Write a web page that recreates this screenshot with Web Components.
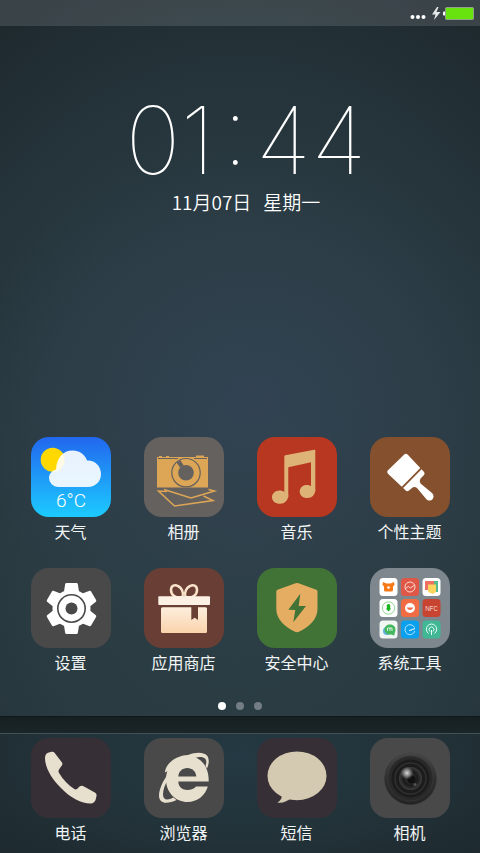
<!DOCTYPE html>
<html lang="zh-CN">
<head>
<meta charset="utf-8">
<meta name="viewport" content="width=device-width, initial-scale=1">
<title>桌面</title>
<style>
    body {
        margin: 0;
        font-family: "Noto Sans CJK SC", sans-serif;
        color: #f2f5f6;
        background: #222e34;
    }
</style>
</head>
<body>
<home-screen></home-screen>
<script>
class StatusBar extends HTMLElement {
    constructor() {
        super();
        this.attachShadow({ mode: "open" });
        this.shadowRoot.innerHTML = /*html*/ `
            <style>
                :host {
                    display: flex;
                    align-items: center;
                    justify-content: flex-end;
                    height: 26px;
                    padding-right: 6px;
                    background: rgba(255, 255, 255, .12);
                }
                svg { display: block; }
            </style>
            <svg width="64" height="26" viewBox="0 0 64 26" role="img" aria-label="正在充电">
                <g fill="#fff">
                    <circle cx="2.5" cy="17" r="2"/><circle cx="8" cy="17" r="2"/><circle cx="13.5" cy="17" r="2"/>
                    <path d="M27 7 22 14.5h3.500L24 20l6.500-8h-4L28.500 7z" fill="#e4e8e8"/>
                    <rect x="33" y="11.500" width="3" height="4" rx="1"/>
                </g>
                <rect x="35.500" y="7.500" width="28" height="12" rx="1" fill="#68e30e" stroke="#8fa08c"/>
            </svg>
        `;
    }
}

class DesktopClock extends HTMLElement {
    constructor() {
        super();
        this.attachShadow({ mode: "open" });
        this.shadowRoot.innerHTML = /*html*/ `
            <style>
                :host { display: block; color: #fff; }
                .time, .date { display: flex; justify-content: center; }
                .time {
                    gap: 8px;
                    font: 100 93px/96px Inter, sans-serif;
                    /* lifts the colon to the middle of the digits */
                    font-feature-settings: "case";
                }
                .date {
                    gap: 12px;
                    font-size: 19px;
                    font-weight: 350;
                    line-height: 28px;
                }
            </style>
            <div class="time"><span class="hours"></span><span>:</span><span class="minutes"></span></div>
            <div class="date"><span class="day"></span><span class="week"></span></div>
        `;
    }

    connectedCallback() {
        const [hours, minutes] = this.getAttribute("time").split(":");
        this.shadowRoot.querySelector(".hours").textContent = hours;
        this.shadowRoot.querySelector(".minutes").textContent = minutes;
        this.shadowRoot.querySelector(".day").textContent = this.getAttribute("day");
        this.shadowRoot.querySelector(".week").textContent = this.getAttribute("week");
    }
}

class AppIcon extends HTMLElement {
    constructor() {
        super();
        this.attachShadow({ mode: "open" });
        this.shadowRoot.innerHTML = /*html*/ `
            <style>
                :host { display: flex; justify-content: center; }
                button {
                    display: flex;
                    flex-direction: column;
                    align-items: center;
                    gap: 2px;
                    padding: 0;
                    border: 0;
                    background: none;
                    color: inherit;
                    font: 400 16px/24px "Noto Sans CJK SC", sans-serif;
                    cursor: pointer;
                }
                .tile {
                    width: 80px;
                    height: 80px;
                    border-radius: 18px;
                    background: var(--tile, #494949);
                    overflow: hidden;
                }
                ::slotted(svg) { display: block; width: 100%; height: 100%; }
            </style>
            <button type="button">
                <span class="tile"><slot></slot></span>
                <span class="label"></span>
            </button>
        `;
    }

    connectedCallback() {
        this.shadowRoot.querySelector(".label").textContent = this.getAttribute("label");
    }
}

class PageDots extends HTMLElement {
    constructor() {
        super();
        this.attachShadow({ mode: "open" });
        this.shadowRoot.innerHTML = /*html*/ `
            <style>
                :host { display: flex; justify-content: center; gap: 10px; }
                span {
                    width: 8px;
                    height: 8px;
                    border-radius: 50%;
                    background: #737d83;
                }
                .active { background: #fff; }
            </style>
        `;
    }

    connectedCallback() {
        const count = parseInt(this.getAttribute("count") || "1", 10);
        const active = parseInt(this.getAttribute("active") || "0", 10);
        for (let i = 0; i < count; i++) {
            const dot = document.createElement("span");
            dot.classList.toggle("active", i === active);
            this.shadowRoot.append(dot);
        }
    }
}

class AppGrid extends HTMLElement {
    constructor() {
        super();
        this.attachShadow({ mode: "open" });
        this.shadowRoot.innerHTML = /*html*/ `
            <style>
                :host {
                    display: grid;
                    grid-template-columns: repeat(4, 1fr);
                    row-gap: 25px;
                    padding: 0 14px;
                }
            </style>
            <slot></slot>
        `;
    }
}

class AppDock extends HTMLElement {
    constructor() {
        super();
        this.attachShadow({ mode: "open" });
        this.shadowRoot.innerHTML = /*html*/ `
            <style>
                :host { display: block; }
                .shelf {
                    height: 16px;
                    border-top: 1px solid #10171a;
                    border-bottom: 1px solid #425057;
                    background: linear-gradient(#161f22, #1b2629);
                }
                .apps {
                    padding: 4px 0 9px;
                    background: radial-gradient(ellipse 75% 130% at 50% 20%, #243943, #223238 55%, #1c272c);
                }
            </style>
            <div class="shelf"></div>
            <div class="apps"><slot></slot></div>
        `;
    }
}

class HomeScreen extends HTMLElement {
    constructor() {
        super();
        this.attachShadow({ mode: "open" });
        this.template = document.createElement("template");
        this.template.innerHTML = /*html*/ `
            <style>
                :host {
                    display: flex;
                    flex-direction: column;
                    min-height: 100vh;
                    background:
                        radial-gradient(ellipse 60% 30% at 53% 47%, rgba(52, 68, 88, .7), rgba(52, 68, 88, 0)),
                        radial-gradient(ellipse 90% 66% at 50% 60%, #2d3f46, #2a3b42 50%, #243339 80%, #1f2a2f 100%);
                }
                desktop-clock { margin: 66px 0 24px 12px; }
                app-grid.main { margin-top: auto; }
                page-dots { margin: 28px 0 6px; }
            </style>
            <status-bar></status-bar>
            <desktop-clock time="01:44" day="11月07日" week="星期一"></desktop-clock>

            <app-grid class="main">
                <app-icon label="天气" style="--tile: linear-gradient(#2267ee, #1ccbff)">
                    <svg viewBox="0 0 80 80">
                        <circle cx="21.7" cy="22.7" r="12" fill="#ffd800"/>
                        <path opacity=".9" fill="#fff" d="M27 50a9 9 0 0 1-9-9c0-4 3-7.500 7-8.500C25.500 21 32 13.500 41.500 13.500c7 0 12.500 4 14.500 10C64 23 70 29 70 37c0 7.500-5.500 13-13 13z"/>
                        <text x="40" y="70" font-family="Roboto, sans-serif" font-weight="300" font-size="19" text-anchor="middle" fill="#fff">6°C</text>
                    </svg>
                </app-icon>
                <app-icon label="相册" style="--tile: #65615e">
                    <svg viewBox="0 0 80 80" fill="none">
                        <path fill="#dca656" d="M13 20h2v-1h3v1h4v-1h3v1h27v-1.500h8V20h4v30.500H13z"/>
                        <path stroke="#65615e" d="M14 21.500h20M50 21.500h13"/>
                        <circle cx="42" cy="35.7" r="14.2" stroke="#65615e" stroke-width="1.200"/>
                        <circle cx="42" cy="35.7" r="7.8" fill="#65615e"/>
                        <path fill="#65615e" d="m32.500 25.500 4-2.300 3.200 5.300-3.700 2z"/>
                        <g stroke="#dca656" stroke-width="1.500">
                            <path d="M20 52.500 47 61l23.500-7-6-1.500"/>
                            <path d="M23 54.500 14.500 54l16 15 38.500-5.500-9.500-4.500"/>
                        </g>
                    </svg>
                </app-icon>
                <app-icon label="音乐" style="--tile: #b83720">
                    <svg viewBox="0 0 80 80" fill="#deb377">
                        <path d="M27.300 19.500q0-1 1-1.200l29-5.600q1-.2 1 .8V54.500H54V25.300l-22.700 4.900v30.300h-4z"/>
                        <path d="M31.300 58c0 5-3.300 8.800-8.300 8.800-4.500 0-8-2.800-8-6.600s3.500-6.700 7.500-6.700c2 0 3.500.500 4.800 1.500z"/>
                        <path d="M58.300 52.500c0 5-3.300 8.500-8 8.500-4.500 0-7.600-2.700-7.600-6.500s3.300-6.500 7-6.500c1.800 0 3.100.400 4.300 1.300z"/>
                    </svg>
                </app-icon>
                <app-icon label="个性主题" style="--tile: #84502d">
                    <svg viewBox="0 0 80 80" fill="#fff">
                        <path d="M34.200 17.500q1.800-1.500 3.600.2l12.500 13.200-18.500 18.800-13.800-13q-1.800-1.700 0-3.500z"/>
                        <path d="M51.600 32.200 54 35q1.300 1.500 0 3l-3.500 3.500q-1.500 2.500 0 5L62 56c2 2 2 4.500.5 6.300s-4.500 1.700-6.300-.3L47 51c-1.800-1.200-3.600-1.200-5 0l-3 2.500q-1.800 1.300-3.300 0l-2.600-2.600z"/>
                    </svg>
                </app-icon>
                <app-icon label="设置">
                    <svg viewBox="0 0 80 80" fill="#fff">
                        <g transform="translate(40.5 40.5)">
                            <circle r="19"/>
                            <path id="tooth" d="M-7.500-17-6.300-24.500q.2-1 1.300-1H5q1.100 0 1.300 1L7.500-17z"/>
                            <use href="#tooth" transform="rotate(60)"/>
                            <use href="#tooth" transform="rotate(120)"/>
                            <use href="#tooth" transform="rotate(180)"/>
                            <use href="#tooth" transform="rotate(240)"/>
                            <use href="#tooth" transform="rotate(300)"/>
                            <circle r="13.7" fill="none" stroke="#494949" stroke-width="1.600"/>
                            <circle r="6" fill="#494949"/>
                        </g>
                    </svg>
                </app-icon>
                <app-icon label="应用商店" style="--tile: #693f35">
                    <svg viewBox="0 0 80 80">
                        <defs>
                            <linearGradient id="box" x2="0" y2="1">
                                <stop stop-color="#fdeedd"/><stop offset="1" stop-color="#fad3ab"/>
                            </linearGradient>
                        </defs>
                        <g fill="none" stroke="#fbe3cb" stroke-width="2.500">
                            <path d="M38.500 29c-7 1.500-11.500-2-11.500-7s4-5.500 7-4c3.500 1.500 6 6 4.500 11z"/>
                            <path d="M41.500 29c7 1.500 11.500-2 11.500-7s-4-5.500-7-4c-3.500 1.500-6 6-4.500 11z"/>
                        </g>
                        <rect x="14.3" y="28.3" width="51.7" height="8.7" rx="1" fill="#fdf1e5"/>
                        <rect x="17" y="39.3" width="46" height="25.7" rx="1.500" fill="url(#box)"/>
                        <path fill="#693f35" d="M47.300 39H54v13l-3.300-2.300-3.400 2.300z"/>
                    </svg>
                </app-icon>
                <app-icon label="安全中心" style="--tile: #417337">
                    <svg viewBox="0 0 80 80">
                        <path fill="#e4ad62" d="M38.500 15.300q1.500-.6 3 0l17.800 6.500q1.200.5 1.200 1.500V41c0 10-8 18-18.500 22.700q-2 .9-4 0C27.500 59 19.300 51 19.300 41V23.300q0-1 1.200-1.500z"/>
                        <path fill="#417337" d="m43.300 25.700-12 16 7 .3-2 12.300L49 38h-7.300z"/>
                    </svg>
                </app-icon>
                <app-icon label="系统工具" style="--tile: #7d878d">
                    <svg viewBox="0 0 80 80" fill="none">
                        <g fill="#fff">
                            <rect x="9.5" y="10" width="18" height="18" rx="3.500"/>
                            <rect x="31" y="10" width="18" height="18" rx="3.500" fill="#df5746"/>
                            <rect x="52.5" y="10" width="18" height="18" rx="3.500"/>
                            <rect x="9.5" y="31" width="18" height="18" rx="3.500"/>
                            <rect x="31" y="31" width="18" height="18" rx="3.500" fill="#f16b43"/>
                            <rect x="52.5" y="31" width="18" height="18" rx="3.500" fill="#c84430"/>
                            <rect x="9.5" y="52.5" width="18" height="18" rx="3.500" fill="#f0f6f3"/>
                            <rect x="31" y="52.5" width="18" height="18" rx="3.500" fill="#0aa0ee"/>
                            <rect x="52.5" y="52.5" width="18" height="18" rx="3.500" fill="#42b795"/>
                        </g>
                        <path fill="#f77a17" d="m13 14 3.500 1.500h4L24 14l.5 3-1.500 1.500V22q0 1.500-1.500 1.500h-6Q14 23.500 14 22v-3.500L12.500 17z"/>
                        <circle cx="18.5" cy="19.5" r="1.300" fill="#fff"/>
                        <g stroke="#fbd9d3"><circle cx="40" cy="19" r="5"/><path d="m35.500 20.500 3-2 2 1.500 4-3"/></g>
                        <path fill="#f07064" d="M55 13h11v9H55z"/><path fill="#54bb8c" d="M64 13h4v11h-4z"/>
                        <path fill="#fcd65f" d="M58 16.500h8V24l-3 2-5-2z"/>
                        <circle cx="18.5" cy="40" r="6.200" stroke="#7bcf7e" stroke-width=".8"/>
                        <path fill="#19b51f" d="M16.800 37q1.700-2 3.400 0v3.500h1l-2.700 3-2.700-3h1z"/>
                        <circle cx="40" cy="40" r="5" fill="#fff"/><path fill="#f16b43" d="M36.500 39.500h7q-3.500 5-7 0z"/>
                        <text x="61.5" y="42.5" font-family="Roboto, sans-serif" font-weight="300" font-size="6.500" text-anchor="middle" fill="#fff">NFC</text>
                        <circle cx="17" cy="63" r="4" fill="#62afe0"/>
                        <path fill="#43b75c" d="M20 56.500c3 0 5.500 2 5.500 5s-1.500 3.500-1 6l-3.500-1c-4 .5-6.500-2-6.500-5s2.500-5 5.500-5z"/>
                        <path stroke="#fff" stroke-width=".8" d="M17.500 63v-3h2.500v3m0-3h2v3"/>
                        <g stroke="#c6e9ff" stroke-width=".9"><path d="M44.500 59.500a5 5 0 1 0 .3 3.500"/><path d="m39 62.500 6-2-4.500 2z"/></g>
                        <g stroke="#e4fff6"><path d="M58.500 65.500a5.200 5.200 0 1 1 6 0"/><path d="M60 63.500a2.500 2.500 0 1 1 3 0M61.500 62v5"/></g>
                    </svg>
                </app-icon>
            </app-grid>

            <page-dots count="3" active="0"></page-dots>

            <app-dock>
                <app-grid>
                    <app-icon label="电话" style="--tile: #362f36">
                        <svg viewBox="0 0 80 80">
                            <path fill="#e8e0cf" d="M14 20c0-2.500 1-4.300 3-5.200l3.500-1c1.300-.4 2.300 0 3 1l7.300 9.500c.8 1.200.8 2 0 3.300L28 31.500c-.8 1.400-.6 2.500.2 3.800 4 6.500 9 11.700 14.800 15.500 1 .7 2 .8 3 .1l2.500-2.300c1.500-1 3-1 4.500-.1l10.800 6c1.500.8 2 2 1.700 3.500l-.8 3.500c-.5 2-2.700 4.200-5.200 4-9 0-20-5.500-29.500-15.500C21 41 14 30 14 20z"/>
                        </svg>
                    </app-icon>
                    <app-icon label="浏览器">
                        <svg viewBox="0 0 80 80">
                            <path fill="#e8e0cf" d="M64.700 43.500H34.300c0 5 4 8.500 9.200 8.500 3.700 0 6.800-1.200 8.500-3.500h11.800c-2.500 9-10.500 15.500-20.300 15.500C31.700 64 22 54.500 22 41.500S31.500 18 43.500 18c12.500 0 21.500 9.500 21.200 25.500zM34.300 38.500h18c-.3-5-4-8.500-9-8.500s-8.700 3.500-9 8.500z"/>
                            <path fill="#e8e0cf" d="M20.800 34.500C22 25 32 17.500 44 17c9-3.500 17-2.500 19.700 1.500 1.500 3 1.500 7-.7 12l-1.500-2.500c1.300-3.500 1-6-.5-7.500-2.500-2-6-2-10.500-.3z"/>
                            <path fill="#e8e0cf" d="M29 31c-8 7-14 19-14 26.500 0 9 9 8.500 17.500 4.500l-3-2.500c-5.500 3-10.500 3-10.500-3 0-5 2-10 5-15z"/>
                        </svg>
                    </app-icon>
                    <app-icon label="短信" style="--tile: #362f36">
                        <svg viewBox="0 0 80 80" fill="#d4cab1">
                            <ellipse cx="40" cy="37.8" rx="29.5" ry="24.4"/>
                            <path d="M24.500 56c1 4-1 6.500-4 8.500 5.500 1 9-1.500 13-3.500z"/>
                        </svg>
                    </app-icon>
                    <app-icon label="相机">
                        <svg viewBox="0 0 80 80">
                            <defs>
                                <linearGradient id="rim" x2="0" y2="1">
                                    <stop stop-color="#464646"/><stop offset=".5" stop-color="#303030"/><stop offset="1" stop-color="#242424"/>
                                </linearGradient>
                                <radialGradient id="glass">
                                    <stop stop-color="#111"/><stop offset=".35" stop-color="#2c2c2c"/><stop offset=".6" stop-color="#1a1a1a"/><stop offset="1" stop-color="#3c3c3c"/>
                                </radialGradient>
                                <radialGradient id="glint">
                                    <stop stop-color="#ddd"/><stop offset=".5" stop-color="#999" stop-opacity=".8"/><stop offset="1" stop-color="#777" stop-opacity="0"/>
                                </radialGradient>
                            </defs>
                            <circle cx="40.5" cy="40.5" r="26.2" fill="url(#rim)"/>
                            <circle cx="40.5" cy="40.5" r="22.5" fill="#292929" stroke="#393939" stroke-width=".8"/>
                            <circle cx="40.5" cy="40.5" r="19" fill="#1c1c1c"/>
                            <circle cx="40.5" cy="40.5" r="15.5" fill="none" stroke="#303030" stroke-width="1.500"/>
                            <circle cx="40.5" cy="40.5" r="11.5" fill="url(#glass)"/>
                            <circle cx="41.5" cy="41.5" r="4" fill="#111"/>
                            <circle cx="37" cy="35" r="6.500" fill="url(#glint)"/>
                            <circle cx="45" cy="46.5" r="1.500" fill="#555"/>
                        </svg>
                    </app-icon>
                </app-grid>
            </app-dock>
        `;
        this.shadowRoot.appendChild(this.template.content.cloneNode(true));
    }
}

customElements.define("status-bar", StatusBar);
customElements.define("desktop-clock", DesktopClock);
customElements.define("app-icon", AppIcon);
customElements.define("page-dots", PageDots);
customElements.define("app-grid", AppGrid);
customElements.define("app-dock", AppDock);
customElements.define("home-screen", HomeScreen);
</script>
</body>
</html>
